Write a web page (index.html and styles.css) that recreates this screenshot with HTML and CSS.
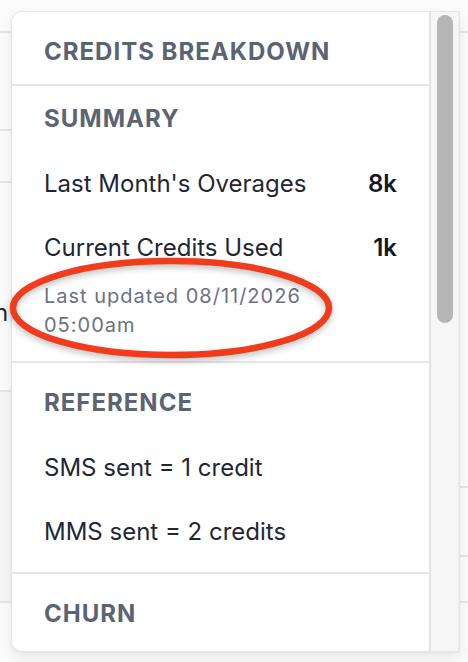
FILE: index.html
```html
<!DOCTYPE html>
<html lang="en">
<head>
    <meta charset="UTF-8">
    <meta name="viewport" content="width=device-width, initial-scale=1.0">
    <title>Credits Breakdown</title>
    <link rel="stylesheet" href="styles.css">
</head>
<body>
    <div class="page">
        <div class="side side-left">
            <div class="row" style="height: 33px"></div>
            <div class="row" style="height: 98px"></div>
            <div class="row" style="height: 52px"></div>
            <div class="row cell-text" style="height: 209px">n</div>
            <div class="row shaded" style="height: 211px"></div>
            <div class="row"></div>
        </div>
        <div class="side side-right">
            <div class="row" style="height: 33px"></div>
            <div class="row" style="height: 455px"></div>
            <div class="row" style="height: 69px"></div>
            <div class="row" style="height: 46px"></div>
            <div class="row"></div>
        </div>
    </div>

    <div class="popover">
        <div class="popover-body">
            <div class="popover-title">Credits Breakdown</div>

            <div class="section section-first">
                <div class="section-title">Summary</div>
                <div class="item">
                    <span>Last Month's Overages</span>
                    <span class="value">8k</span>
                </div>
                <div class="item">
                    <span>Current Credits Used</span>
                    <span class="value">1k</span>
                </div>
                <div class="updated">Last updated 08/11/2026 05:00am</div>
            </div>

            <div class="section">
                <div class="section-title">Reference</div>
                <div class="item">SMS sent = 1 credit</div>
                <div class="item">MMS sent = 2 credits</div>
            </div>

            <div class="section">
                <div class="section-title">Churn</div>
            </div>
        </div>
        <div class="scrollbar">
            <div class="thumb"></div>
        </div>
    </div>

    <!-- annotation drawn over the screenshot -->
    <svg class="annotation" width="340" height="112" viewBox="0 0 340 112">
        <ellipse cx="165" cy="54" rx="158" ry="47" fill="none" stroke="#f03b1d" stroke-width="6.5"/>
    </svg>
</body>
</html>
```

FILE: styles.css
```css
:root {
    --heading: #5b6473;
    --text: #1f2733;
    --muted: #6b7280;
    --line: #e4e4e9;
}

* {
    margin: 0;
    padding: 0;
    box-sizing: border-box;
}

body {
    width: 468px;
    height: 662px;
    overflow: hidden;
    position: relative;
    background: #fbfbfc;
    font-family: 'Inter', 'Noto Sans', sans-serif;
}

.page {
    display: flex;
    justify-content: space-between;
    height: 100%;
}

.side {
    display: flex;
    flex-direction: column;
}

.side-left {
    width: 11px;
}

.side-right {
    width: 8px;
}

.row {
    border-bottom: 2px solid var(--line);
    flex-shrink: 0;
}

.row:last-child {
    border-bottom: none;
}

.shaded {
    background: #f5f5f7;
}

.cell-text {
    font-size: 24px;
    color: var(--text);
    padding-top: 118px;
    margin-left: -6px;
    line-height: 24px;
}

.popover {
    position: absolute;
    top: 11px;
    left: 11px;
    width: 449px;
    height: 641px;
    display: flex;
    background: #fff;
    border: 1px solid #e6e6ea;
    border-radius: 11px 0 0 11px;
    box-shadow: 0 6px 14px rgba(0, 0, 0, 0.07), 0 1px 3px rgba(0, 0, 0, 0.05);
    overflow: hidden;
}

.popover-body {
    flex: 1;
    min-width: 0;
}

.popover-title,
.section-title {
    font-size: 24px;
    font-weight: 700;
    letter-spacing: 1px;
    text-transform: uppercase;
    color: var(--heading);
    line-height: 22px;
}

.popover-title {
    padding: 29px 32px 21px;
    border-bottom: 2px solid var(--line);
}

.section {
    padding: 29px 32px 9px;
    border-bottom: 2px solid var(--line);
}

.section-first {
    padding-top: 22px;
    padding-bottom: 21px;
}

.section:last-child {
    border-bottom: none;
}

.section-title {
    margin-bottom: 21px;
}

.item {
    display: flex;
    justify-content: space-between;
    align-items: center;
    height: 64px;
    font-size: 24px;
    color: var(--text);
}

.value {
    font-weight: 600;
    color: #111827;
}

.updated {
    font-size: 20px;
    letter-spacing: 1px;
    line-height: 29px;
    color: var(--muted);
    width: 300px;
    margin-top: 3px;
}

.scrollbar {
    width: 30px;
    flex-shrink: 0;
    background: #f6f6f7;
    border-left: 2px solid #e3e3e6;
    border-right: 1px solid #ececef;
    padding: 3px 0 0 6px;
}

.thumb {
    width: 16px;
    height: 308px;
    border-radius: 8px;
    background: #b5b5b5;
}

.annotation {
    position: absolute;
    left: 6px;
    top: 254px;
    filter: drop-shadow(0 3px 3px rgba(0, 0, 0, 0.25));
}
```
